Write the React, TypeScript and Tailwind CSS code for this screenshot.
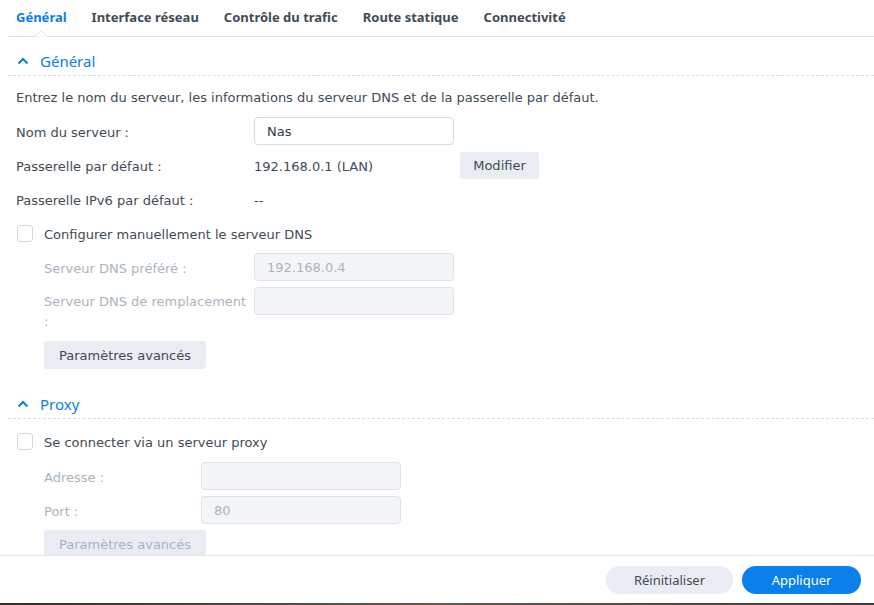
import React from "react";

const UI = { fontFamily: '"Noto Sans", "Open Sans", sans-serif' };
const BODY = { fontFamily: '"DejaVu Sans", Verdana, sans-serif' };

function Chevron() {
  return (
    <svg width="12" height="8" viewBox="0 0 12 8" className="mr-[11px] ml-[1px]">
      <path d="M1.5 6.5 L6 2 L10.5 6.5" fill="none" stroke="#0a7ee6" strokeWidth="2" />
    </svg>
  );
}

function SectionHeader({ title }: { title: string }) {
  return (
    <div style={UI} className="h-[29px] flex items-center pl-[8px] border-b border-dashed border-[#d5dde6]">
      <Chevron />
      <span className="text-[15px] text-[#0a7ee6] leading-[28px]">{title}</span>
    </div>
  );
}

function Checkbox() {
  return <div className="w-[16px] h-[17px] rounded-[3px] border border-[#cfd7e0] bg-white mr-[11px] ml-[1px]" />;
}

export default function App() {
  return (
    <div style={BODY} className="w-[874px] h-[605px] bg-white flex flex-col overflow-hidden text-[13px] leading-[20px] text-[#414b55]">
      {/* Tabs */}
      <div style={UI} className="relative h-[37px] ml-[8px] border-b border-[#d9e1ea] flex items-center pl-[8px] pb-[2px] gap-[25px] font-bold text-[13px] shrink-0">
        <span className="text-[#0a7ee6]">Général</span>
        <span>Interface réseau</span>
        <span>Contrôle du trafic</span>
        <span>Route statique</span>
        <span>Connectivité</span>
        <svg width="12" height="7" viewBox="0 0 12 7" className="absolute left-[27px] bottom-[-1px]">
          <path d="M0 6.5 L6 0.8 L12 6.5" fill="white" stroke="#d9e1ea" strokeWidth="1" />
          <rect x="0" y="6.5" width="12" height="1" fill="white" />
        </svg>
      </div>

      {/* Body */}
      <div className="flex-1 overflow-hidden ml-[8px]">
        <div className="mt-[10px]">
          <SectionHeader title="Général" />
        </div>
        <div className="pl-[8px]">
          <div className="mt-[12px] h-[20px]">
            Entrez le nom du serveur, les informations du serveur DNS et de la passerelle par défaut.
          </div>

          <div className="mt-[9px] flex items-center h-[28px]">
            <div className="w-[238px] pt-[3px]">Nom du serveur :</div>
            <div className="w-[200px] h-[28px] rounded-[4px] border border-[#d4dbe3] bg-white flex items-center px-[12px] pt-[2px] text-[#2f3a45]">Nas</div>
          </div>

          <div className="mt-[6px] flex items-center h-[28px]">
            <div className="w-[238px] pt-[3px]">Passerelle par défaut :</div>
            <div className="w-[206px] pt-[3px]">192.168.0.1 (LAN)</div>
            <div className="h-[27px] w-[79px] rounded-[3px] bg-[#e9edf3] flex items-center justify-center pt-[2px]">Modifier</div>
          </div>

          <div className="mt-[6px] flex items-center h-[28px]">
            <div className="w-[238px] pt-[3px]">Passerelle IPv6 par défaut :</div>
            <div className="pt-[3px]">--</div>
          </div>

          <div className="mt-[6px] flex items-center h-[28px]">
            <Checkbox />
            <span className="pt-[3px]">Configurer manuellement le serveur DNS</span>
          </div>

          <div className="pl-[28px]">
            <div className="mt-[6px] flex items-center h-[28px]">
              <div className="w-[210px] text-[#aab4be] pt-[3px]">Serveur DNS préféré :</div>
              <div className="w-[200px] h-[28px] rounded-[4px] border border-[#dde3ea] bg-[#f3f5f8] flex items-center px-[12px] pt-[2px] text-[#aab4be]">192.168.0.4</div>
            </div>

            <div className="mt-[6px] flex items-start">
              <div className="w-[210px] text-[#aab4be] pt-[5px]">
                Serveur DNS de remplacement
                <br />:
              </div>
              <div className="w-[200px] h-[28px] rounded-[4px] border border-[#dde3ea] bg-[#f3f5f8]" />
            </div>

            <div className="mt-[9px] h-[28px] w-[162px] rounded-[3px] bg-[#e9edf3] flex items-center justify-center pt-[2px]">Paramètres avancés</div>
          </div>
        </div>

        <div className="mt-[21px]">
          <SectionHeader title="Proxy" />
        </div>
        <div className="pl-[8px]">
          <div className="mt-[8px] flex items-center h-[28px]">
            <Checkbox />
            <span className="pt-[3px]">Se connecter via un serveur proxy</span>
          </div>
          <div className="pl-[28px]">
            <div className="mt-[7px] flex items-center h-[28px]">
              <div className="w-[157px] text-[#aab4be] pt-[3px]">Adresse :</div>
              <div className="w-[200px] h-[28px] rounded-[4px] border border-[#dde3ea] bg-[#f3f5f8]" />
            </div>
            <div className="mt-[6px] flex items-center h-[28px]">
              <div className="w-[157px] text-[#aab4be] pt-[3px]">Port :</div>
              <div className="w-[200px] h-[28px] rounded-[4px] border border-[#dde3ea] bg-[#f3f5f8] flex items-center px-[12px] pt-[2px] text-[#aab4be]">80</div>
            </div>
            <div className="mt-[6px] h-[28px] w-[162px] rounded-[3px] bg-[#e9edf3] flex items-center justify-center pt-[2px] text-[#aab4be]">Paramètres avancés</div>
          </div>
        </div>
      </div>

      {/* Footer */}
      <div style={UI} className="h-[48px] border-t border-[#e3e7ec] flex items-center justify-end pr-[13px] gap-[9px] shrink-0">
        <div className="w-[127px] h-[28px] rounded-full bg-[#e9edf3] flex items-center justify-center text-[#414b55]">Réinitialiser</div>
        <div className="w-[119px] h-[28px] rounded-full bg-[#0a80ea] flex items-center justify-center text-white">Appliquer</div>
      </div>
      <div className="h-[2px] shrink-0 bg-gradient-to-r from-[#3a2a24] via-[#6b5a4c] to-[#3e3a3a]" />
    </div>
  );
}
